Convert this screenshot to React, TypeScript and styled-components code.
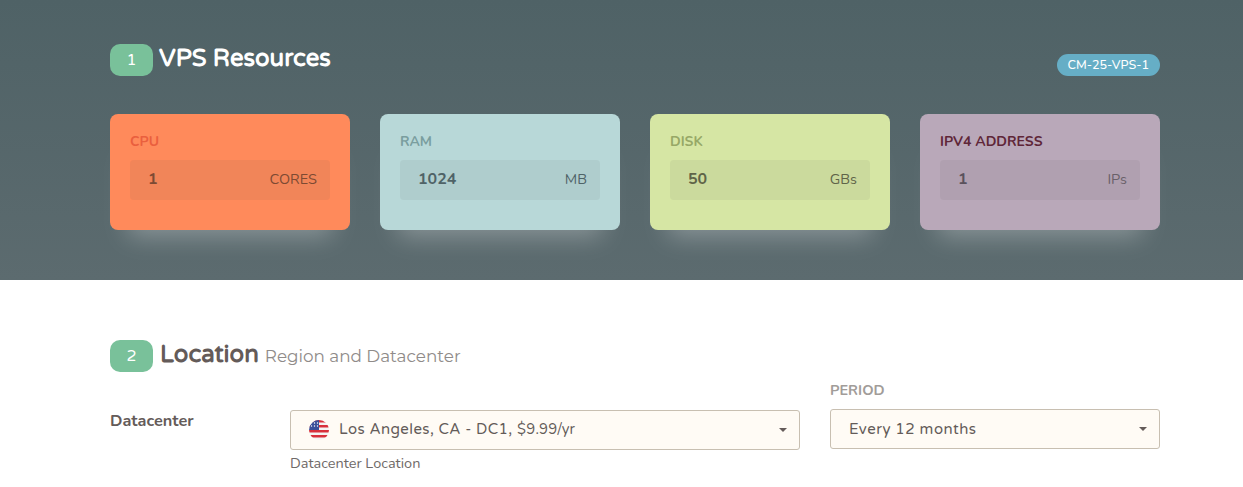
import React from "react";
import styled, { createGlobalStyle } from "styled-components";

const GlobalStyle = createGlobalStyle`
  html, body {
    margin: 0;
    padding: 0;
    background: #fff;
    font-family: "Nunito", "Noto Sans", sans-serif;
  }
  * { box-sizing: border-box; }
`;

const Page = styled.div`
  width: 1243px;
  height: 487px;
  overflow: hidden;
`;

const Hero = styled.section`
  height: 280px;
  padding: 44px 83px 0 110px;
  background: linear-gradient(180deg, #4f6266 0%, #5c6b6f 100%);
`;

const HeroHead = styled.div`
  display: flex;
  align-items: flex-start;
  justify-content: space-between;
  height: 70px;
`;

const TitleRow = styled.div`
  display: flex;
  align-items: center;
  height: 32px;
`;

const StepBadge = styled.span`
  display: flex;
  align-items: center;
  justify-content: center;
  width: 43px;
  height: 32px;
  margin-right: 6px;
  border-radius: 10px;
  background: #79c19a;
  color: #fff;
  font-family: "Varela Round", "Noto Sans", sans-serif;
  font-size: 16px;
`;

const HeroTitle = styled.h2`
  margin: -4px 0 0;
  color: #fff;
  font-family: "Varela Round", "Nunito", sans-serif;
  font-size: 24px;
  font-weight: 700;
`;

const SkuTag = styled.span`
  display: block;
  margin-top: 10px;
  padding: 0 11px;
  height: 22px;
  line-height: 22px;
  border-radius: 11px;
  background: #66aec6;
  color: #fff;
  font-family: "Nunito", sans-serif;
  font-size: 12.5px;
  font-weight: 500;
`;

const Cards = styled.div`
  display: grid;
  grid-template-columns: repeat(4, 240px);
  gap: 30px;
`;

const Card = styled.div<{ $bg: string }>`
  height: 116px;
  padding: 18px 20px 0;
  border-radius: 8px;
  background: ${(p) => p.$bg};
  box-shadow: 0 24px 24px -18px rgba(255, 255, 255, 0.3);
`;

const CardLabel = styled.div<{ $color: string }>`
  height: 19px;
  margin-bottom: 9px;
  color: ${(p) => p.$color};
  font-family: "Nunito", sans-serif;
  font-size: 14px;
  font-weight: 700;
  line-height: 19px;
`;

const Meter = styled.div`
  display: flex;
  align-items: center;
  justify-content: space-between;
  height: 40px;
  padding: 0 13px 2px 18px;
  border-radius: 4px;
  background: rgba(80, 80, 80, 0.08);
`;

const MeterValue = styled.span<{ $color: string }>`
  color: ${(p) => p.$color};
  font-family: "Nunito", sans-serif;
  font-size: 16px;
  font-weight: 700;
`;

const MeterUnit = styled.span<{ $color: string }>`
  color: ${(p) => p.$color};
  font-family: "Nunito", sans-serif;
  font-size: 14.5px;
`;

const Location = styled.section`
  padding: 60px 83px 0 110px;
`;

const LocationTitle = styled(TitleRow)`
  margin-bottom: 9px;
`;

const SectionTitle = styled.h2`
  margin: -4px 0 0 1px;
  color: #645b59;
  font-family: "Varela Round", "Nunito", sans-serif;
  font-size: 24px;
  font-weight: 700;
`;

const SectionNote = styled.span`
  margin: -1px 0 0 6px;
  color: #8f8b89;
  font-family: "Montserrat", "Noto Sans", sans-serif;
  font-size: 16.8px;
`;

const FormRow = styled.div`
  display: grid;
  grid-template-columns: 150px 510px 330px;
  column-gap: 30px;
`;

const RowLabel = styled.div`
  margin-top: 29px;
  color: #645b59;
  font-family: "Nunito", sans-serif;
  font-size: 16.3px;
  font-weight: 700;
`;

const SelectColumn = styled.div`
  padding-top: 29px;
`;

const PeriodLabel = styled.div`
  height: 19px;
  margin-bottom: 9px;
  color: #a19c99;
  font-family: "Nunito", sans-serif;
  font-size: 14.5px;
  font-weight: 700;
  line-height: 19px;
`;

const SelectBox = styled.div<{ $padBottom: number }>`
  position: relative;
  display: flex;
  align-items: center;
  gap: 10px;
  height: 40px;
  padding: 0 18px ${(p) => p.$padBottom}px;
  border: 1px solid #c8bfb1;
  border-radius: 3px;
  background: #fffbf5;
  color: #645b59;
  font-family: "Varela Round", "Nunito", sans-serif;
  font-size: 15px;
  letter-spacing: 0.5px;
  white-space: pre;

  &::after {
    content: "";
    position: absolute;
    right: 12px;
    top: 17px;
    border-left: 4px solid transparent;
    border-right: 4px solid transparent;
    border-top: 4px solid #645b59;
  }
`;

const SelectText = styled.span`
  letter-spacing: 0.4px;
`;

const Price = styled.span`
  font-family: "Nunito", sans-serif;
  letter-spacing: 0.25px;
`;

const FlagIcon = styled.svg`
  flex: none;
  width: 20px;
  height: 20px;
  margin-top: 2px;
`;

const HelpText = styled.div`
  margin-top: 3px;
  color: #6f6a68;
  font-family: "Nunito", sans-serif;
  font-size: 14.5px;
`;

const UsFlag = () => (
  <FlagIcon viewBox="0 0 20 20">
    <defs>
      <clipPath id="round-flag">
        <circle cx="10" cy="10" r="10" />
      </clipPath>
    </defs>
    <g clipPath="url(#round-flag)">
      <rect width="20" height="20" fill="#f4f4f4" />
      <rect y="0" width="20" height="2.5" fill="#d8303c" />
      <rect y="5" width="20" height="2.5" fill="#d8303c" />
      <rect y="10" width="20" height="2.5" fill="#d8303c" />
      <rect y="15" width="20" height="2.5" fill="#d8303c" />
      <rect width="10" height="10" fill="#3b4f9a" />
      <g fill="#fff">
        <circle cx="2.5" cy="3" r="0.7" />
        <circle cx="5.5" cy="3" r="0.7" />
        <circle cx="8.5" cy="3" r="0.7" />
        <circle cx="2.5" cy="6" r="0.7" />
        <circle cx="5.5" cy="6" r="0.7" />
        <circle cx="8.5" cy="6" r="0.7" />
      </g>
    </g>
  </FlagIcon>
);

const resources = [
  { label: "CPU", value: "1", unit: "CORES", bg: "#ff8a5b", labelColor: "#ea5f3e", valueColor: "#7d4a33", unitColor: "#7d4a33" },
  { label: "RAM", value: "1024", unit: "MB", bg: "#b8d8d8", labelColor: "#7a9e9f", valueColor: "#4f6367", unitColor: "#4f6367" },
  { label: "DISK", value: "50", unit: "GBs", bg: "#d6e6a4", labelColor: "#97a867", valueColor: "#5f6448", unitColor: "#5f6448" },
  { label: "IPV4 ADDRESS", value: "1", unit: "IPs", bg: "#b9a8b9", labelColor: "#5f2638", valueColor: "#5a525c", unitColor: "#6a6069" },
];

export default function App() {
  return (
    <Page>
      <GlobalStyle />
      <Hero>
        <HeroHead>
          <TitleRow>
            <StepBadge>1</StepBadge>
            <HeroTitle>VPS Resources</HeroTitle>
          </TitleRow>
          <SkuTag>CM-25-VPS-1</SkuTag>
        </HeroHead>
        <Cards>
          {resources.map((r) => (
            <Card key={r.label} $bg={r.bg}>
              <CardLabel $color={r.labelColor}>{r.label}</CardLabel>
              <Meter>
                <MeterValue $color={r.valueColor}>{r.value}</MeterValue>
                <MeterUnit $color={r.unitColor}>{r.unit}</MeterUnit>
              </Meter>
            </Card>
          ))}
        </Cards>
      </Hero>
      <Location>
        <LocationTitle>
          <StepBadge>2</StepBadge>
          <SectionTitle>Location</SectionTitle>
          <SectionNote>Region and Datacenter</SectionNote>
        </LocationTitle>
        <FormRow>
          <RowLabel>Datacenter</RowLabel>
          <SelectColumn>
            <SelectBox $padBottom={2}>
              <UsFlag />
              <SelectText>
                Los Angeles, CA - DC1, <Price>$9.99/yr</Price>
              </SelectText>
            </SelectBox>
            <HelpText>Datacenter Location</HelpText>
          </SelectColumn>
          <div>
            <PeriodLabel>PERIOD</PeriodLabel>
            <SelectBox $padBottom={0}>Every 12 months</SelectBox>
          </div>
        </FormRow>
      </Location>
    </Page>
  );
}
